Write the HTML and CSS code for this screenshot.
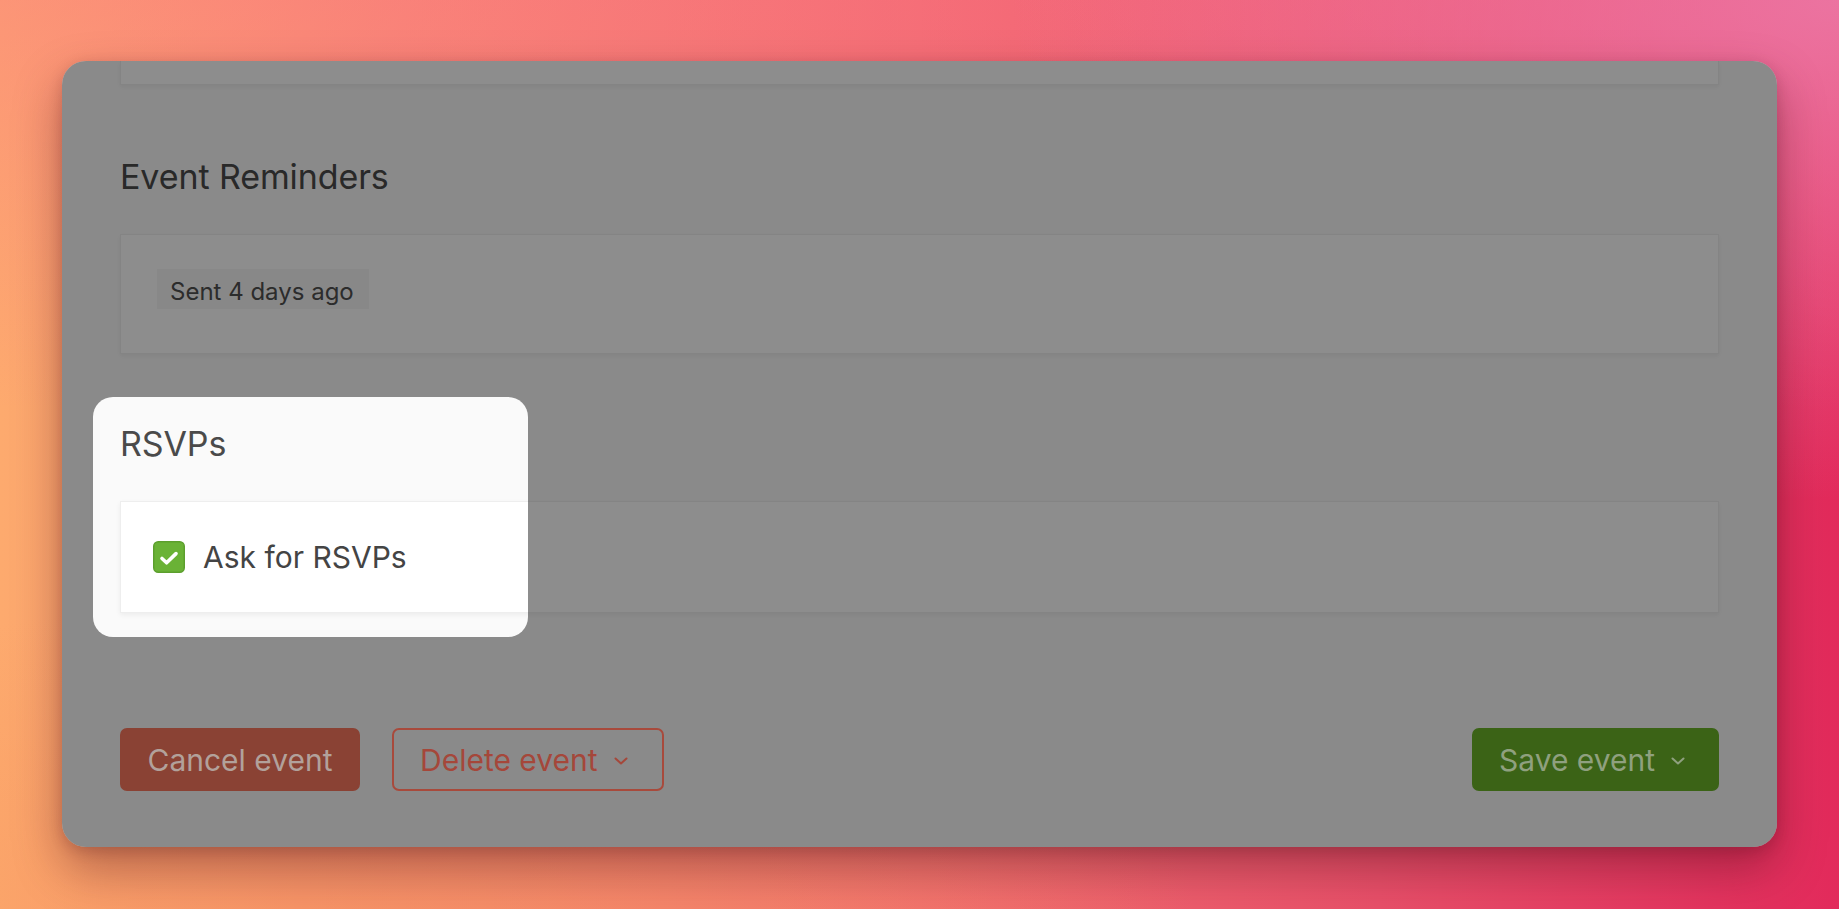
FILE: index.html
```html
<!DOCTYPE html>
<html lang="en">
<head>
<meta charset="utf-8">
<title>Event settings</title>
<link rel="stylesheet" href="styles.css">
</head>
<body>
<main class="stage">
  <div class="panel">
    <div class="card card-clipped"></div>

    <section class="section section-reminders">
      <h2 class="section-title">Event Reminders</h2>
      <div class="card card-reminders">
        <span class="badge">Sent 4 days ago</span>
      </div>
    </section>

    <section class="section section-rsvp">
      <h2 class="section-title">RSVPs</h2>
      <div class="card card-rsvp">
        <label class="check">
          <svg class="check-box" width="32" height="32" viewBox="0 0 32 32" aria-hidden="true">
            <rect x="0.75" y="0.75" width="30.5" height="30.5" rx="4.5" fill="#6ab236" stroke="#5c9f2d" stroke-width="1.5"/>
            <path d="M9 17.5 L13.6 21.8 L23 12.6" fill="none" stroke="#ffffff" stroke-width="3.6" stroke-linecap="round" stroke-linejoin="round"/>
          </svg>
          <span class="check-label">Ask for RSVPs</span>
        </label>
      </div>
    </section>

    <div class="actions">
      <div class="actions-left">
        <button class="btn btn-cancel" type="button">Cancel event</button>
        <button class="btn btn-delete" type="button">Delete event
          <svg class="chev" width="14" height="8" viewBox="0 0 14 8" aria-hidden="true"><path d="M1.5 1.5 L7 6.5 L12.5 1.5" fill="none" stroke="currentColor" stroke-width="2" stroke-linecap="round" stroke-linejoin="round"/></svg>
        </button>
      </div>
      <button class="btn btn-save" type="button">Save event
        <svg class="chev" width="14" height="8" viewBox="0 0 14 8" aria-hidden="true"><path d="M1.5 1.5 L7 6.5 L12.5 1.5" fill="none" stroke="currentColor" stroke-width="2" stroke-linecap="round" stroke-linejoin="round"/></svg>
      </button>
    </div>

    <div class="spotlight" aria-hidden="true"></div>
  </div>
</main>
</body>
</html>
```

FILE: styles.css
```css
* { box-sizing: border-box; }

html, body {
  margin: 0;
  height: 100%;
}

body {
  font-family: "Inter", "Noto Sans", "Liberation Sans", sans-serif;
  background:
    radial-gradient(ellipse 45% 55% at 100% 0%, rgba(236, 124, 170, 0.85), rgba(236, 124, 170, 0) 100%),
    radial-gradient(ellipse 45% 35% at 20% 100%, rgba(246, 150, 95, 0.55), rgba(246, 150, 95, 0) 100%),
    linear-gradient(to bottom, rgba(250, 110, 135, 0.35), rgba(250, 110, 135, 0) 45%),
    linear-gradient(to right, #fdaa6e 0%, #f98c72 22%, #f36e70 50%, #e9506a 75%, #e22a5b 100%);
  overflow: hidden;
}

.stage {
  height: 100%;
  padding: 61px 62px 62px 62px;
}

.panel {
  position: relative;
  height: 786px;
  background: #fafafa;
  border-radius: 24px;
  overflow: hidden;
  padding: 0 58px 56px 58px;
  display: flex;
  flex-direction: column;
  box-shadow: 0 22px 48px rgba(70, 10, 20, 0.38), 0 4px 14px rgba(70, 10, 20, 0.18);
}

.card {
  background: #ffffff;
  border: 1px solid #eeeeee;
  box-shadow: 0 2px 5px rgba(0, 0, 0, 0.06);
}

.card-clipped {
  height: 24px;
  border-top: none;
  flex: none;
}

.section-reminders { margin-top: 71px; }
.section-rsvp { margin-top: 69px; }

.section-title {
  margin: 0 0 37px 0;
  font-size: 34px;
  font-weight: 400;
  line-height: 41px;
  color: #4a4a4a;
  letter-spacing: -0.1px;
}

.card-reminders {
  height: 120px;
  padding: 34px 36px;
}

.badge {
  display: inline-block;
  height: 40px;
  padding: 8px 15px 0 13px;
  font-size: 24px;
  line-height: 29px;
  background: #f6f6f6;
  color: #505050;
}

.card-rsvp {
  height: 112px;
  padding: 0 32px;
  display: flex;
  align-items: center;
}

.check {
  display: flex;
  align-items: center;
  gap: 18px;
}

.check-box { display: block; flex: none; }

.check-label {
  font-size: 30px;
  line-height: 36px;
  color: #444444;
}

.actions {
  margin-top: auto;
  display: flex;
  justify-content: space-between;
  align-items: center;
  position: relative;
  z-index: 2;
}

.actions-left {
  display: flex;
  gap: 32px;
}

.btn {
  height: 63px;
  font-family: inherit;
  font-size: 30px;
  line-height: 36px;
  border-radius: 7px;
  border: 2px solid transparent;
  display: inline-flex;
  align-items: center;
  gap: 16px;
  cursor: pointer;
}

.btn-cancel {
  width: 240px;
  justify-content: center;
  background: #8a4234;
  border-color: #8a4234;
  color: #b2a19b;
}

.btn-delete {
  width: 272px;
  padding: 0 0 0 26px;
  background: transparent;
  border-color: #a84a3c;
  color: #a5473a;
}

.btn-save {
  width: 247px;
  padding: 0 0 0 25px;
  background: #3b6316;
  border-color: #3b6316;
  color: #8fa07f;
}

.chev { display: block; margin-top: 2px; }

.spotlight {
  position: absolute;
  left: 31px;
  top: 336px;
  width: 435px;
  height: 240px;
  border-radius: 20px;
  box-shadow: 0 0 0 3000px rgba(0, 0, 0, 0.448);
  pointer-events: none;
  z-index: 1;
}
```
